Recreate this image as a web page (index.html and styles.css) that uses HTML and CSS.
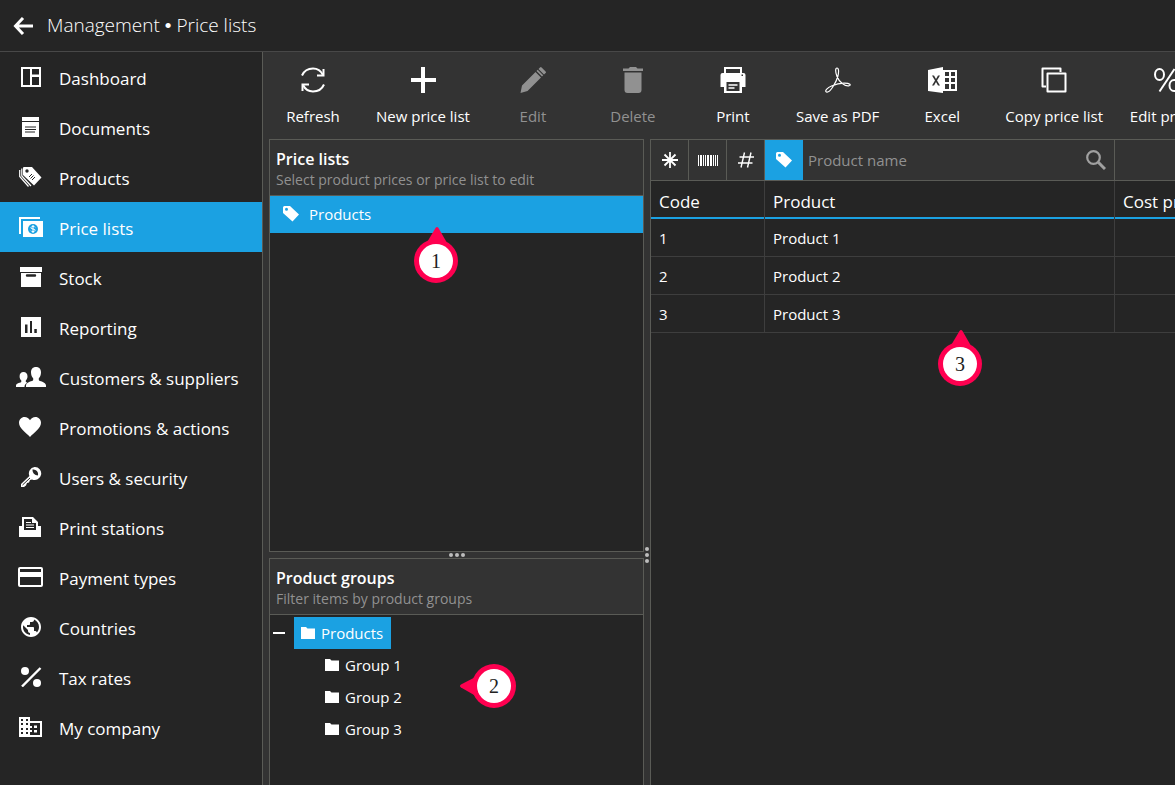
FILE: index.html
```html
<!DOCTYPE html>
<html lang="en">
<head>
    <meta charset="UTF-8">
    <meta name="viewport" content="width=device-width, initial-scale=1.0">
    <title>Management - Price lists</title>
    <link rel="stylesheet" href="styles.css">
</head>
<body>
    <header class="topbar">
        <button class="back" aria-label="Back">
            <svg width="20" height="18" viewBox="0 0 20 18"><path d="M10 1 2.500 9l7.500 8M2.500 9H20" fill="none" stroke="currentColor" stroke-width="3"/></svg>
        </button>
        <h1>Management <span class="bullet">•</span> Price lists</h1>
    </header>

    <div class="layout">
        <nav class="sidebar">
            <a href="#">
                <svg viewBox="0 0 30 20"><path fill-rule="evenodd" d="M5 0h20v20H5zM7 2v16h7V2zM16 2v5.500h7V2zM16 10v8h7v-8z"/></svg>
                <span>Dashboard</span>
            </a>
            <a href="#">
                <svg viewBox="0 0 30 20"><path fill-rule="evenodd" d="M6 0h17v4H6zM6 5h17v15H6zM9 9.500v1h11v-1zM9 12v1h11v-1zM9 14.500v1h10v-1z"/></svg>
                <span>Documents</span>
            </a>
            <a href="#">
                <svg viewBox="0 0 30 20"><path fill-rule="evenodd" d="M7 1q0-1 1-1h8l9.500 10.500-7.500 8L7 8zM9.300 4a1.700 1.700 0 1 0 3.400 0 1.700 1.700 0 1 0-3.400 0z"/><path d="M3.700 3v6.500L12.500 19.500M5.800 1.500v7.500L15 19" fill="none" stroke="currentColor" stroke-width="1.200"/><path class="cut" d="m13 10 3-3M14.500 11.500l3-3M16 13l3-3"/></svg>
                <span>Products</span>
            </a>
            <a href="#" class="active">
                <svg viewBox="0 0 30 20"><path d="M3 0h21v2H5v15H3zM7 4h20v16H7z"/><circle class="coin" cx="17" cy="12" r="5"/><path d="M19 10.300q-.5-1-2-1t-2 1.200 2 1.500 2 1.500-2 1.200-2-1M17 8v8" fill="none" stroke="currentColor"/></svg>
                <span>Price lists</span>
            </a>
            <a href="#">
                <svg viewBox="0 0 30 20"><path fill-rule="evenodd" d="M4 0h22v5H4zM5 6h20v14H5zM11 7.300a1 1 0 0 0 0 2.400h8a1 1 0 0 0 0-2.400z"/></svg>
                <span>Stock</span>
            </a>
            <a href="#">
                <svg viewBox="0 0 30 20"><path fill-rule="evenodd" d="M5 0h20v20H5zM9 7.500v8.500h2.500V7.500zM14 4v12h2V4zM18.300 12v4h2.500v-4z"/></svg>
                <span>Reporting</span>
            </a>
            <a href="#">
                <svg viewBox="0 0 30 20"><path d="M20 0c3.300 0 5 2.200 5 5.500 0 2.600-1 4.500-2.200 5.800V13c0 1.300 7.200 1.800 7.200 5.500V20H10v-1.500c0-3.700 7.200-4.200 7.200-5.500v-1.700C16 10 15 8.100 15 5.500 15 2.200 16.700 0 20 0zM7.500 5c2.500 0 4 1.700 4 4.300 0 2-.8 3.400-1.700 4.300v1.200c0 .5 1 .7 1.600 1C9.400 16.800 8.500 18 8.500 20H0v-1.500c0-2.600 5.300-2.600 5.300-3.800v-1.100c-1-.9-1.700-2.300-1.700-4.300C3.600 6.700 5 5 7.500 5z"/></svg>
                <span>Customers &amp; suppliers</span>
            </a>
            <a href="#">
                <svg viewBox="0 0 30 20"><path d="M14 20C10 15.500 3 11.500 3 5.800 3 2.500 5.500 0 8.600 0 11 0 13 1.300 14 3.300 15 1.300 17 0 19.400 0 22.500 0 25 2.500 25 5.800 25 11.500 18 15.500 14 20z"/></svg>
                <span>Promotions &amp; actions</span>
            </a>
            <a href="#">
                <svg viewBox="0 0 30 20"><path fill-rule="evenodd" d="M18.500 0A6.500 6.500 0 1 1 16 12.400l-2 .6-1 2.500-2 .5-1 2.500L8 20H5v-3l8.400-8A6.500 6.500 0 0 1 18.500 0zM16.500 2.500a5.500 5.500 0 0 0 5.300 6A4.600 4.600 0 0 0 16.500 2.500z"/><path class="cut" d="m6.500 18 7.500-7"/></svg>
                <span>Users &amp; security</span>
            </a>
            <a href="#">
                <svg viewBox="0 0 30 20"><path fill-rule="evenodd" d="M6 9V0h11l5 5v4h3v11H3V9zM8 2v11h12V6h-4V2z"/><path d="M10 5.500h5M10 8h8M10 10.500h8" stroke="currentColor" stroke-width="1.200"/></svg>
                <span>Print stations</span>
            </a>
            <a href="#">
                <svg viewBox="0 0 30 20"><path fill-rule="evenodd" d="M4 0h21q2 0 2 2v16q0 2-2 2H4q-2 0-2-2V2q0-2 2-2zM4 2v3h21V2zM4 10v8h21v-8z"/></svg>
                <span>Payment types</span>
            </a>
            <a href="#">
                <svg viewBox="0 0 30 20"><path transform="translate(3 -2)" d="M12 2C6.480 2 2 6.480 2 12s4.480 10 10 10 10-4.480 10-10S17.520 2 12 2zm-1 17.930c-3.950-.49-7-3.850-7-7.930 0-.62.080-1.210.210-1.790L9 15v1c0 1.100.9 2 2 2v1.930zm6.900-2.540c-.26-.81-1-1.390-1.900-1.390h-1v-3c0-.55-.45-1-1-1H8v-2h2c.55 0 1-.45 1-1V7h2c1.100 0 2-.9 2-2v-.41c2.930 1.190 5 4.060 5 7.410 0 2.080-.8 3.970-2.100 5.390z"/></svg>
                <span>Countries</span>
            </a>
            <a href="#">
                <svg viewBox="0 0 30 20"><circle cx="9" cy="4" r="4"/><circle cx="21" cy="16" r="4"/><path d="M6 19.500 24.500 1" stroke="currentColor" stroke-width="2.400"/></svg>
                <span>Tax rates</span>
            </a>
            <a href="#">
                <svg viewBox="0 0 30 20"><path fill-rule="evenodd" d="M3 0h11v4h12v16H3zM5 2v2h2V2zM5 6v2h2V6zM5 11v2h2v-2zM5 15v2h2v-2zM10 2v2h2V2zM10 6v2h2V6zM10 11v2h2v-2zM10 15v2h2v-2zM14 6v3h2v2h-2v2h2v2h-2v3h10V6zM18 8.500h3V11h-3zM18 13h3v2.500h-3z"/></svg>
                <span>My company</span>
            </a>
        </nav>

        <main class="main">
            <div class="toolbar">
                <button>
                    <svg viewBox="0 0 30 26"><path d="M4 8.500C6 4 10.500 1.500 15 1.500c4.500 0 8 2.500 10 6.500M26 17.500c-2 4.500-6.500 7-11 7-4.500 0-8-2.500-10-6.500" fill="none" stroke="currentColor" stroke-width="2"/><path d="M25.500 2v6.500H19M4.500 24v-6.500H11" fill="none" stroke="currentColor" stroke-width="2"/></svg>
                    Refresh
                </button>
                <button>
                    <svg viewBox="0 0 30 26"><path d="M13 0h4v11h11v4H17v11h-4V15H3v-4h10z"/></svg>
                    New price list
                </button>
                <button disabled>
                    <svg viewBox="0 0 30 26"><path d="M2.500 26 4 18.500 17.500 5l5.500 5.500L9.500 24zM18.500 4l1.200-1.200 5.500 5.500L24 9.500zM20.500 2 22 .5q.8-.8 1.600 0l4 4q.8.800 0 1.600L26 7.500z"/></svg>
                    Edit
                </button>
                <button disabled>
                    <svg viewBox="0 0 30 26"><path d="M5 1.500h5.500L12 0h6l1.500 1.500H25V4H5zM6.500 5.500h17V23q0 3-3 3h-11q-3 0-3-3z"/></svg>
                    Delete
                </button>
                <button>
                    <svg viewBox="0 0 30 26"><path fill-rule="evenodd" d="M6 0h18v6h1.500q2 0 2 2v12H24v6H6v-6H2.500V8q0-2 2-2H6zM8 2v4h14V2zM8.500 15v9h13v-9zM23.500 7.500V9H25V7.500z"/><path d="M10.500 18h9M10.500 21h6" stroke="currentColor" stroke-width="1.300"/></svg>
                    Print
                </button>
                <button>
                    <svg viewBox="0 0 30 26"><path d="M3.500 25C1 24 5 20.500 8.500 19c4-1.700 8-2.800 12.500-2.900 6.500-.1 7.500 2.400 4.700 2.800-4.200.6-9.700-4.400-11.700-9.400C12.200 5 12.200 1 14 1s2 4 .8 8.500C13 16 6.500 26.500 3.500 25z" fill="none" stroke="currentColor" stroke-width="1.200"/></svg>
                    Save as PDF
                </button>
                <button>
                    <svg viewBox="0 0 30 26"><path fill-rule="evenodd" d="M1 3 16 0v3h14v21H16v2L1 24zM5 8.500 8 13.500l-3 5h2L9 15l2 3.500h2l-3-5 3-5h-2L9 12 7 8.500zM18 5v4h4V5zM24 5v4h4V5zM18 11v4h4v-4zM24 11v4h4v-4zM18 17v5h4v-5zM24 17v5h4v-5z"/></svg>
                    Excel
                </button>
                <button>
                    <svg viewBox="0 0 30 26"><path d="M7 19.500H3.500V1.500h18V5M8.500 6.500h18v18h-18z" fill="none" stroke="currentColor" stroke-width="2" stroke-linejoin="round"/></svg>
                    Copy price list
                </button>
                <button>
                    <svg viewBox="0 0 30 26"><path d="M23.500 2 8.500 24.500" stroke="currentColor" stroke-width="2"/><ellipse cx="8.500" cy="7.500" rx="4.500" ry="5.500" fill="none" stroke="currentColor" stroke-width="2"/><ellipse cx="23" cy="18.500" rx="4.500" ry="5.500" fill="none" stroke="currentColor" stroke-width="2"/></svg>
                    Edit prices
                </button>
            </div>

            <div class="workspace">
                <section class="panel lists">
                    <div class="panel-head">
                        <h2>Price lists</h2>
                        <p>Select product prices or price list to edit</p>
                    </div>
                    <a href="#" class="list-item">
                        <svg width="16" height="16" viewBox="0 0 16 16"><path fill-rule="evenodd" d="M0 1.500Q0 0 1.500 0H7l9 8.500L9.500 15.500 0 7zM2 3.300a1.500 1.500 0 1 0 3 0 1.500 1.500 0 1 0-3 0z"/></svg>
                        Products
                    </a>
                    <div class="marker marker-1">
                        <svg width="44" height="56" viewBox="0 0 44 56"><path d="M13.500 14.500 21.500 1q1.500-2 3 0l8 14z"/><circle cx="22" cy="34" r="22"/></svg>
                        <span>1</span>
                    </div>
                </section>

                <div class="dots dots-h"><i></i><i></i><i></i></div>

                <section class="panel groups">
                    <div class="panel-head">
                        <h2>Product groups</h2>
                        <p>Filter items by product groups</p>
                    </div>
                    <div class="tree">
                        <div class="tree-root">
                            <button class="collapse" aria-label="Collapse"></button>
                            <a href="#" class="node selected"><svg width="14" height="12" viewBox="0 0 14 12"><path d="M0 0h5l1.500 1.500H14V12H0z"/></svg>Products</a>
                        </div>
                        <div class="tree-children">
                            <a href="#" class="node"><svg width="14" height="12" viewBox="0 0 14 12"><path d="M0 0h5l1.500 1.500H14V12H0z"/></svg>Group 1</a>
                            <a href="#" class="node"><svg width="14" height="12" viewBox="0 0 14 12"><path d="M0 0h5l1.500 1.500H14V12H0z"/></svg>Group 2</a>
                            <a href="#" class="node"><svg width="14" height="12" viewBox="0 0 14 12"><path d="M0 0h5l1.500 1.500H14V12H0z"/></svg>Group 3</a>
                        </div>
                    </div>
                    <div class="marker marker-2">
                        <svg width="56" height="44" viewBox="0 0 56 44"><path d="M14.500 13.500 1 20.500q-2 1.500 0 3l14 8z"/><circle cx="34" cy="22" r="22"/></svg>
                        <span>2</span>
                    </div>
                </section>

                <div class="dots dots-v"><i></i><i></i><i></i></div>

                <section class="items">
                    <div class="filter">
                        <button class="filter-btn" aria-label="All fields">
                            <svg width="16" height="16" viewBox="0 0 16 16"><path d="M8 0v16M0 8h16M2.500 2.500l11 11M13.500 2.500l-11 11" stroke="currentColor" stroke-width="1.800"/></svg>
                        </button>
                        <button class="filter-btn" aria-label="Barcode">
                            <svg width="20" height="11" viewBox="0 0 20 11"><path d="M0 0h1v11H0zM2 0h2v11H2zM5 0h1v11H5zM7 0h1v11H7zM9 0h2v11H9zM12 0h2v11h-2zM15 0h1v11h-1zM17 0h1v11h-1zM19 0h1v11h-1z"/></svg>
                        </button>
                        <button class="filter-btn" aria-label="Code">
                            <svg width="16" height="16" viewBox="0 0 16 16"><path d="M6.500.5 3 15.500M13 .5 9.500 15.500M1.500 5H16M0 11h14.500" fill="none" stroke="currentColor" stroke-width="1.400"/></svg>
                        </button>
                        <button class="filter-btn on" aria-label="Name">
                            <svg width="16" height="16" viewBox="0 0 16 16"><path fill-rule="evenodd" d="M0 1.500Q0 0 1.500 0H7l9 8.500L9.500 15.500 0 7zM2 3.300a1.500 1.500 0 1 0 3 0 1.500 1.500 0 1 0-3 0z"/></svg>
                        </button>
                        <div class="search">
                            <input type="text" placeholder="Product name" aria-label="Product name">
                            <button aria-label="Search">
                                <svg width="20" height="20" viewBox="0 0 20 20"><circle cx="7.500" cy="7.500" r="6.300" fill="none" stroke="currentColor" stroke-width="2.200"/><path d="m12 12 7 7" stroke="currentColor" stroke-width="3"/></svg>
                            </button>
                        </div>
                    </div>
                    <table>
                        <colgroup><col class="col-code"><col class="col-product"><col></colgroup>
                        <thead>
                            <tr><th>Code</th><th>Product</th><th>Cost price</th></tr>
                        </thead>
                        <tbody>
                            <tr><td>1</td><td>Product 1</td><td></td></tr>
                            <tr><td>2</td><td>Product 2</td><td></td></tr>
                            <tr><td>3</td><td>Product 3</td><td></td></tr>
                        </tbody>
                    </table>
                    <div class="marker marker-3">
                        <svg width="44" height="56" viewBox="0 0 44 56"><path d="M13.500 14.500 21.500 1q1.500-2 3 0l8 14z"/><circle cx="22" cy="34" r="22"/></svg>
                        <span>3</span>
                    </div>
                </section>
            </div>
        </main>
    </div>
</body>
</html>
```
FILE: styles.css
```css
:root {
    --bg: #252525;
    --surface: #333333;
    --line: #5a5b56;
    --row-line: #3e3e3e;
    --accent: #1ba1e2;
    --muted: #919191;
    --pin: #ff0050;
}

* {
    box-sizing: border-box;
}

body {
    margin: 0;
    height: 100vh;
    display: flex;
    flex-direction: column;
    overflow: hidden;
    background: var(--bg);
    color: #fff;
    font-family: "Segoe UI", "Open Sans", "Noto Sans", sans-serif;
    font-size: 15px;
    line-height: 20px;
}

button {
    padding: 0;
    border: none;
    background: none;
    color: inherit;
    font: inherit;
    cursor: pointer;
}

a {
    color: inherit;
    text-decoration: none;
}

h1, h2, p {
    margin: 0;
}

svg {
    display: block;
    flex: none;
    fill: currentColor;
}

/* top bar */
.topbar {
    flex: none;
    display: flex;
    align-items: center;
    gap: 14px;
    height: 52px;
    padding-left: 13px;
    border-bottom: 1px solid #484848;
}

.topbar h1 {
    font-size: 19px;
    font-weight: 300;
    line-height: 28px;
}

.bullet {
    font-family: "Liberation Sans", sans-serif;
}

.layout {
    flex: 1;
    min-height: 0;
    display: flex;
}

/* sidebar */
.sidebar {
    flex: none;
    width: 263px;
    border-right: 1px solid var(--line);
}

.sidebar a {
    display: flex;
    align-items: center;
    gap: 13px;
    height: 50px;
    padding-left: 16px;
    font-size: 17px;
}

.sidebar span {
    padding-top: 3px;
}

.sidebar svg {
    width: 30px;
    height: 20px;
}

.sidebar .active {
    background: var(--accent);
}

.cut {
    fill: none;
    stroke: var(--bg);
}

.coin {
    fill: var(--accent);
}

/* toolbar */
.main {
    flex: 1;
    min-width: 0;
    display: flex;
    flex-direction: column;
    background: var(--surface);
}

.toolbar {
    flex: none;
    display: flex;
    height: 87px;
    overflow: hidden;
}

.toolbar button {
    flex: none;
    display: flex;
    flex-direction: column;
    align-items: center;
    gap: 13px;
    min-width: 100px;
    padding: 15px 13px 0;
    white-space: nowrap;
}

.toolbar svg {
    width: 30px;
    height: 26px;
}

.toolbar button:disabled {
    color: var(--muted);
    cursor: default;
}

/* panels */
.workspace {
    flex: 1;
    min-height: 0;
    display: grid;
    grid-template-columns: 375px 6px minmax(0, 1fr);
    grid-template-rows: minmax(0, 413fr) 6px minmax(0, 227fr);
    grid-template-areas:
        "lists  .      items"
        "hsplit vsplit items"
        "groups .      items";
    padding-left: 6px;
}

.panel {
    position: relative;
    border: 1px solid var(--line);
    background: var(--bg);
}

.lists {
    grid-area: lists;
}

.groups {
    grid-area: groups;
    border-bottom: none;
}

.panel-head {
    height: 56px;
    padding: 8px 6px 0;
    background: var(--surface);
    border-bottom: 1px solid var(--line);
}

.panel-head h2 {
    font-size: 16px;
    font-weight: 600;
    line-height: 22px;
}

.panel-head p {
    color: var(--muted);
    font-size: 14px;
}

.list-item {
    display: flex;
    align-items: center;
    gap: 10px;
    height: 37px;
    padding: 0 13px 2px;
    background: var(--accent);
}

.dots {
    display: flex;
    align-items: center;
    justify-content: center;
    gap: 2px;
}

.dots i {
    flex: none;
    width: 4px;
    height: 4px;
    border-radius: 50%;
    background: #bdbdbd;
}

.dots-h {
    grid-area: hsplit;
}

.dots-v {
    grid-area: vsplit;
    flex-direction: column;
}

/* group tree */
.tree {
    padding: 2px 3px;
}

.tree-root {
    display: flex;
    align-items: center;
    gap: 9px;
}

.collapse {
    width: 12px;
    height: 2px;
    background: #fff;
}

.tree-children {
    display: flex;
    flex-direction: column;
    align-items: flex-start;
    padding-left: 45px;
}

.node {
    display: flex;
    align-items: center;
    gap: 6px;
    height: 32px;
    padding: 0 8px 0 7px;
}

.node.selected {
    background: var(--accent);
}

/* price table */
.items {
    grid-area: items;
    position: relative;
    overflow: hidden;
    border: 1px solid var(--line);
    border-width: 1px 0 0 1px;
    background: var(--bg);
}

.filter {
    display: flex;
    height: 41px;
    background: var(--surface);
    border-bottom: 1px solid var(--line);
}

.filter-btn {
    flex: none;
    display: flex;
    align-items: center;
    justify-content: center;
    width: 38px;
    border-right: 1px solid var(--line);
}

.filter-btn.on {
    background: var(--accent);
    border-right: none;
}

.search {
    flex: none;
    display: flex;
    align-items: center;
    width: 312px;
    padding: 0 8px 0 5px;
    border-right: 1px solid var(--line);
}

.search input {
    flex: 1;
    min-width: 0;
    padding: 0;
    border: none;
    outline: none;
    background: none;
    color: #fff;
    font: inherit;
}

.search input::placeholder {
    color: var(--muted);
    opacity: 1;
}

.search button {
    color: #a0a0a0;
}

table {
    width: 100%;
    min-width: 640px;
    table-layout: fixed;
    border-collapse: separate;
    border-spacing: 0;
}

.col-code {
    width: 114px;
}

.col-product {
    width: 350px;
}

th, td {
    height: 38px;
    padding: 0 8px;
    border-right: 1px solid var(--row-line);
    text-align: left;
    white-space: nowrap;
}

th {
    box-shadow: inset 0 -2px var(--accent);
    font-size: 17px;
    font-weight: 400;
    padding-top: 4px;
}

td {
    border-bottom: 1px solid var(--row-line);
}

/* numbered callouts */
.marker {
    position: absolute;
    color: var(--pin);
}

.marker span {
    position: absolute;
    width: 34px;
    height: 34px;
    border-radius: 50%;
    background: #fff;
    color: #222;
    font-family: "Liberation Serif", serif;
    font-size: 20px;
    line-height: 34px;
    text-align: center;
}

.marker-1 {
    left: 144px;
    top: 87px;
}

.marker-2 {
    left: 190px;
    top: 105px;
}

.marker-3 {
    left: 287px;
    top: 190px;
}

.marker-1 span,
.marker-3 span {
    left: 5px;
    top: 17px;
}

.marker-2 span {
    left: 17px;
    top: 5px;
}
```
